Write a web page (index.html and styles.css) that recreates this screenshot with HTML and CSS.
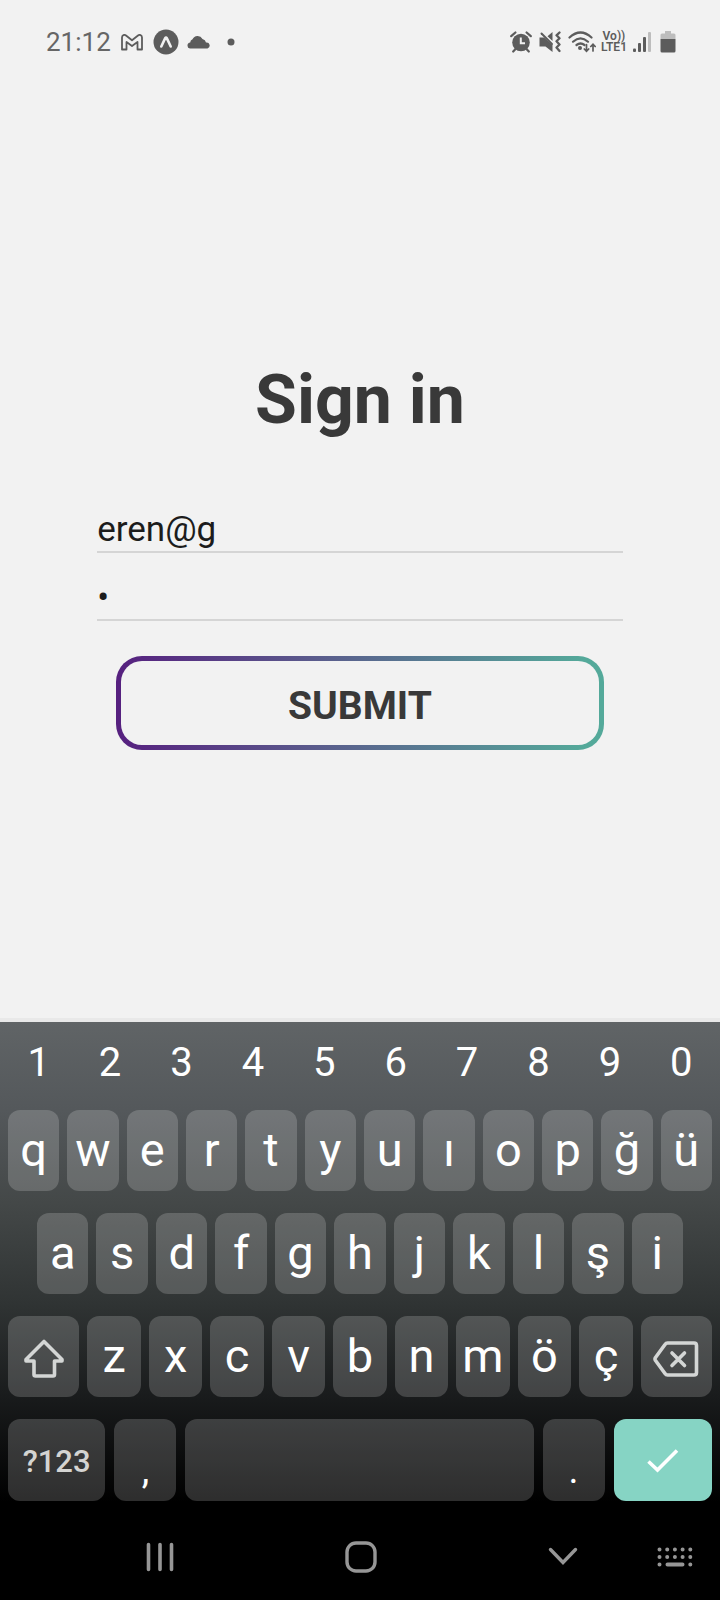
FILE: index.html
```html
<!DOCTYPE html>
<html lang="tr">
<head>
<meta charset="utf-8">
<meta name="viewport" content="width=device-width, initial-scale=1">
<title>Sign in</title>
<link rel="stylesheet" href="styles.css">
</head>
<body>
<div class="screen">
  <header class="status">
    <div class="status-left">
      <span class="clock">21:12</span>
      <svg class="ico-mail" width="22" height="17" viewBox="0 0 22 17" fill="none" stroke="currentColor" stroke-width="1.8" stroke-linejoin="round"><path d="M1 15.500V3.500C1 1 3.500.3 5 1.500L11 6.200 17 1.500C18.500.3 21 1 21 3.500V15.500H16.500V8L11 12 5.500 8V15.500Z"/></svg>
      <svg width="26" height="26" viewBox="0 0 26 26"><circle cx="13" cy="13" r="12.500" fill="currentColor"/><path d="M8.300 17.500 12.200 9.200Q13 7.800 13.800 9.200L17.700 17.500" fill="none" stroke="#f1f1f1" stroke-width="2.600" stroke-linecap="round"/></svg>
      <svg class="ico-cloud" width="23" height="13" viewBox="0 0 23 13" fill="currentColor"><path d="M3 12.500A2.900 2.900 0 0 1 .5 9.500 3 3 0 0 1 3.200 6.500 3.600 3.600 0 0 1 5.500 3.300 5.600 5.600 0 0 1 15.500 2.900 4.500 4.500 0 0 1 19 6.500 3.100 3.100 0 0 1 20.500 12.500Z"/></svg>
      <svg class="ico-dot" width="8" height="8" viewBox="0 0 8 8"><circle cx="4" cy="4" r="3.500" fill="currentColor"/></svg>
    </div>
    <div class="status-right">
      <svg width="22" height="22" viewBox="0 0 22 22" fill="currentColor"><circle cx="11" cy="11.500" r="8.800"/><path d="M1.200 5.200 5.400 1.500M20.800 5.200 16.600 1.500M3.200 20.500 6 17.500M18.800 20.500 16 17.500" stroke="currentColor" stroke-width="2.200" stroke-linecap="round"/><path d="M10.800 6.500V12.300H15" fill="none" stroke="#f1f1f1" stroke-width="2"/></svg>
      <svg width="22" height="22" viewBox="0 0 22 22" fill="none" stroke="currentColor" stroke-width="2" stroke-linecap="round"><path d="M.5 6.500H5L13.500 14V21L6.500 15.500H.5Z M8.500 5.200 13.500 1V10Z" fill="currentColor" stroke="none"/><path d="M2.500 2.500 13 13"/><path d="M20.500 1.500 17.500 4.300 20.500 7.300 17.500 10.300 20.500 13.500 17.500 16.500 20.500 20" stroke-linejoin="round" stroke-width="2.300"/></svg>
      <svg width="28" height="22" viewBox="0 0 28 22" fill="none" stroke="currentColor" stroke-width="2.200" stroke-linecap="round"><path d="M1.500 6.500Q12.500-3.500 23.500 6.500M5 10.700Q12.500 4 20 10.700M8.500 14Q12.500 11 16.500 14"/><circle cx="12" cy="17" r="2" fill="currentColor" stroke="none"/><path d="M18.500 13.500V20M16.300 18 18.500 20.200 20.700 18M25 20V13.500M22.800 15.500 25 13.300 27.200 15.500" stroke-width="1.700"/></svg>
      <span class="volte"><span>Vo))</span><span>LTE1</span></span>
      <svg width="20" height="22" viewBox="0 0 20 22" fill="currentColor"><rect x="1" y="17.500" width="3" height="3.500" rx="1"/><rect x="6" y="12" width="3" height="9" rx="1"/><rect x="11" y="6" width="3" height="15" rx="1"/><rect x="16" y="1" width="3" height="20" rx="1" opacity=".35"/></svg>
      <svg class="ico-battery" width="16" height="22" viewBox="0 0 16 22" fill="currentColor"><path d="M5 0H11V2.500H14Q15.500 2.500 15.500 4V8H.5V4Q.5 2.500 2 2.500H5Z" opacity=".35"/><path d="M.5 8H15.500V20Q15.500 21.500 14 21.500H2Q.5 21.500 .5 20Z"/></svg>
    </div>
  </header>

  <main class="content">
    <h1 class="title">Sign in</h1>
    <form class="form">
      <input class="field" type="text" value="eren@g" aria-label="E-mail">
      <input class="field" type="password" value="1" aria-label="Password">
      <button class="submit" type="button">SUBMIT</button>
    </form>
  </main>

  <section class="keyboard" aria-label="Keyboard">
    <div class="numbers">
      <button>1</button><button>2</button><button>3</button><button>4</button><button>5</button><button>6</button><button>7</button><button>8</button><button>9</button><button>0</button>
    </div>
    <div class="row">
      <button class="key">q</button><button class="key">w</button><button class="key">e</button><button class="key">r</button><button class="key">t</button><button class="key">y</button><button class="key">u</button><button class="key">ı</button><button class="key">o</button><button class="key">p</button><button class="key">ğ</button><button class="key">ü</button>
    </div>
    <div class="row row-home">
      <button class="key">a</button><button class="key">s</button><button class="key">d</button><button class="key">f</button><button class="key">g</button><button class="key">h</button><button class="key">j</button><button class="key">k</button><button class="key">l</button><button class="key">ş</button><button class="key">i</button>
    </div>
    <div class="row row-lower">
      <button class="key key-icon" aria-label="Shift"><svg width="40" height="40" viewBox="0 0 40 40" fill="none" stroke="currentColor" stroke-width="3.600" stroke-linejoin="round"><path d="M20 2.500 38 20.500V22H30.500V35.500Q30.500 37 29 37H11.500Q10 37 10 35.500V22H2V20.500Z"/></svg></button>
      <button class="key">z</button><button class="key">x</button><button class="key">c</button><button class="key">v</button><button class="key">b</button><button class="key">n</button><button class="key">m</button><button class="key">ö</button><button class="key">ç</button>
      <button class="key key-icon" aria-label="Backspace"><svg width="46" height="36" viewBox="0 0 46 36" fill="none" stroke="currentColor" stroke-width="3.600" stroke-linejoin="round" stroke-linecap="round"><path d="M14.500 2H41Q43.500 2 43.500 4.500V31.500Q43.500 34 41 34H14.500Q13 34 12 32.500L2.500 19.500Q1.500 18 2.500 16.500L12 3.500Q13 2 14.500 2Z"/><path d="M19 12 31.500 24.500M31.500 12 19 24.500"/></svg></button>
    </div>
    <div class="row row-bottom">
      <button class="key key-symbols">?123</button>
      <button class="key key-point">,</button>
      <button class="key" aria-label="Space"></button>
      <button class="key key-point">.</button>
      <button class="key key-done" aria-label="Done"><svg width="32" height="26" viewBox="0 0 32 26" fill="none" stroke="currentColor" stroke-width="3.600"><path d="M1.500 13.500 10.500 22 30 2.500"/></svg></button>
    </div>
    <nav class="navbar">
      <button class="nav-recents" aria-label="Recents"><svg width="28" height="30" viewBox="0 0 28 30" stroke="currentColor" stroke-width="3.600" stroke-linecap="round"><path d="M2.500 2.500V27.500M14 2.500V27.500M25.500 2.500V27.500"/></svg></button>
      <button class="nav-home" aria-label="Home"><svg width="32" height="32" viewBox="0 0 32 32" fill="none" stroke="currentColor" stroke-width="3.400"><rect x="2" y="2" width="28" height="28" rx="9"/></svg></button>
      <button class="nav-hide" aria-label="Hide keyboard"><svg width="30" height="20" viewBox="0 0 30 20" fill="none" stroke="currentColor" stroke-width="3.400" stroke-linecap="round"><path d="M2.500 2.500 15 15.500 27.500 2.500"/></svg></button>
      <button class="nav-switch" aria-label="Switch keyboard"><svg width="36" height="20" viewBox="0 0 36 20" stroke="currentColor" stroke-width="4" stroke-linecap="round"><path d="M2.500 2.500h.01M10.200 2.500h.01M17.900 2.500h.01M25.600 2.500h.01M33.300 2.500h.01M2.500 10h.01M10.200 10h.01M17.900 10h.01M25.600 10h.01M33.300 10h.01M2.500 17.500h.01M10.500 17.500H25.500M33.300 17.500h.01"/></svg></button>
    </nav>
  </section>
</div>
</body>
</html>
```
FILE: styles.css
```css
* {
  box-sizing: border-box;
}

body {
  margin: 0;
  background: #f2f2f2;
  color: #393939;
  font-family: Roboto, "Noto Sans", sans-serif;
}

button,
input {
  margin: 0;
  padding: 0;
  border: 0;
  border-radius: 0;
  background: none;
  color: inherit;
  font: inherit;
  outline: none;
}

svg {
  display: block;
  flex: none;
}

.screen {
  display: flex;
  flex-direction: column;
  min-height: 100vh;
}

/* Status bar */

.status {
  display: flex;
  justify-content: space-between;
  align-items: center;
  height: 84px;
  padding: 0 44px 0 46px;
  color: #5c5c5c;
}

.status-left,
.status-right {
  display: flex;
  align-items: center;
}

.status-left {
  gap: 10px;
}

.status-right {
  gap: 7px;
}

.clock {
  color: #666;
  font-size: 26px;
  line-height: 32px;
}

.ico-cloud {
  margin: 0 7px 0 -2px;
}

.volte {
  display: flex;
  flex-direction: column;
  align-items: center;
  margin: 0 -2px;
  font-size: 12px;
  font-weight: 600;
  line-height: 11px;
}

.ico-battery {
  margin-left: 1px;
}

/* Sign-in form */

.content {
  flex: 1;
  padding-top: 276px;
  border-bottom: 4px solid #e9e9e9;
}

.title {
  margin: 0 0 68px;
  font-size: 68px;
  font-weight: 700;
  line-height: 80px;
  text-align: center;
}

.form {
  display: flex;
  flex-direction: column;
  width: 73%;
  margin: 0 auto;
}

.field {
  width: 100%;
  height: 45px;
  margin-bottom: 23px;
  border-bottom: 2px solid #d5d5d5;
  color: #1c1c1c;
  font-size: 35px;
}

.submit {
  align-self: center;
  width: 93%;
  height: 94px;
  margin-top: 12px;
  padding-top: 6px;
  border: 5px solid transparent;
  border-radius: 26px;
  background:
    linear-gradient(#f2f2f2, #f2f2f2) padding-box,
    linear-gradient(90deg, #56207f, #5a5a8c 40%, #54a99a 96%) border-box;
  font-size: 39px;
  font-weight: 700;
}

/* Keyboard */

.keyboard {
  background: linear-gradient(#606466, #54585b 88px, #444848 180px, #303434 280px, #191b1c 375px, #000 480px);
  color: #fff;
}

.numbers {
  display: grid;
  grid-template-columns: repeat(10, 1fr);
  height: 80px;
  margin-bottom: 8px;
  padding: 0 3px;
  font-size: 40px;
}

.row {
  display: grid;
  grid-template-columns: repeat(12, 1fr);
  grid-auto-rows: 81px;
  gap: 8px;
  margin-bottom: 22px;
  padding: 0 8px;
}

.row-home {
  grid-template-columns: repeat(11, 1fr);
  padding: 0 37px;
}

.row-lower {
  grid-template-columns: 4fr repeat(9, 3fr) 4fr;
}

.row-bottom {
  grid-template-columns: 97fr 62fr 347fr 62fr 98fr;
  grid-auto-rows: 82px;
  gap: 9px;
  margin-bottom: 0;
}

.key {
  display: flex;
  justify-content: center;
  align-items: center;
  min-width: 0;
  padding-bottom: 2px;
  border-radius: 12px;
  background: rgba(255, 255, 255, 0.18);
  font-size: 47px;
}

.key svg {
  color: #d4d6d5;
}

.key-icon {
  padding: 4px 0 0;
}

.key-symbols {
  padding: 2px 0 0;
  color: #d4d4d2;
  font-size: 31px;
  font-weight: 500;
}

.key-point {
  padding: 20px 0 0;
  font-size: 38px;
}

.key-done {
  padding: 2px 0 0;
  background: #86d4c4;
}

.key-done svg {
  color: #fff;
}

/* System navigation */

.navbar {
  display: grid;
  grid-template-columns: 146fr 28px 172fr 32px 171fr 30px 79fr 36px 27fr;
  align-items: center;
  height: 99px;
  padding-top: 13px;
  color: #969696;
}

.nav-recents {
  grid-column: 2;
}

.nav-home {
  grid-column: 4;
}

.nav-hide {
  grid-column: 6;
}

.nav-switch {
  grid-column: 8;
}
```
